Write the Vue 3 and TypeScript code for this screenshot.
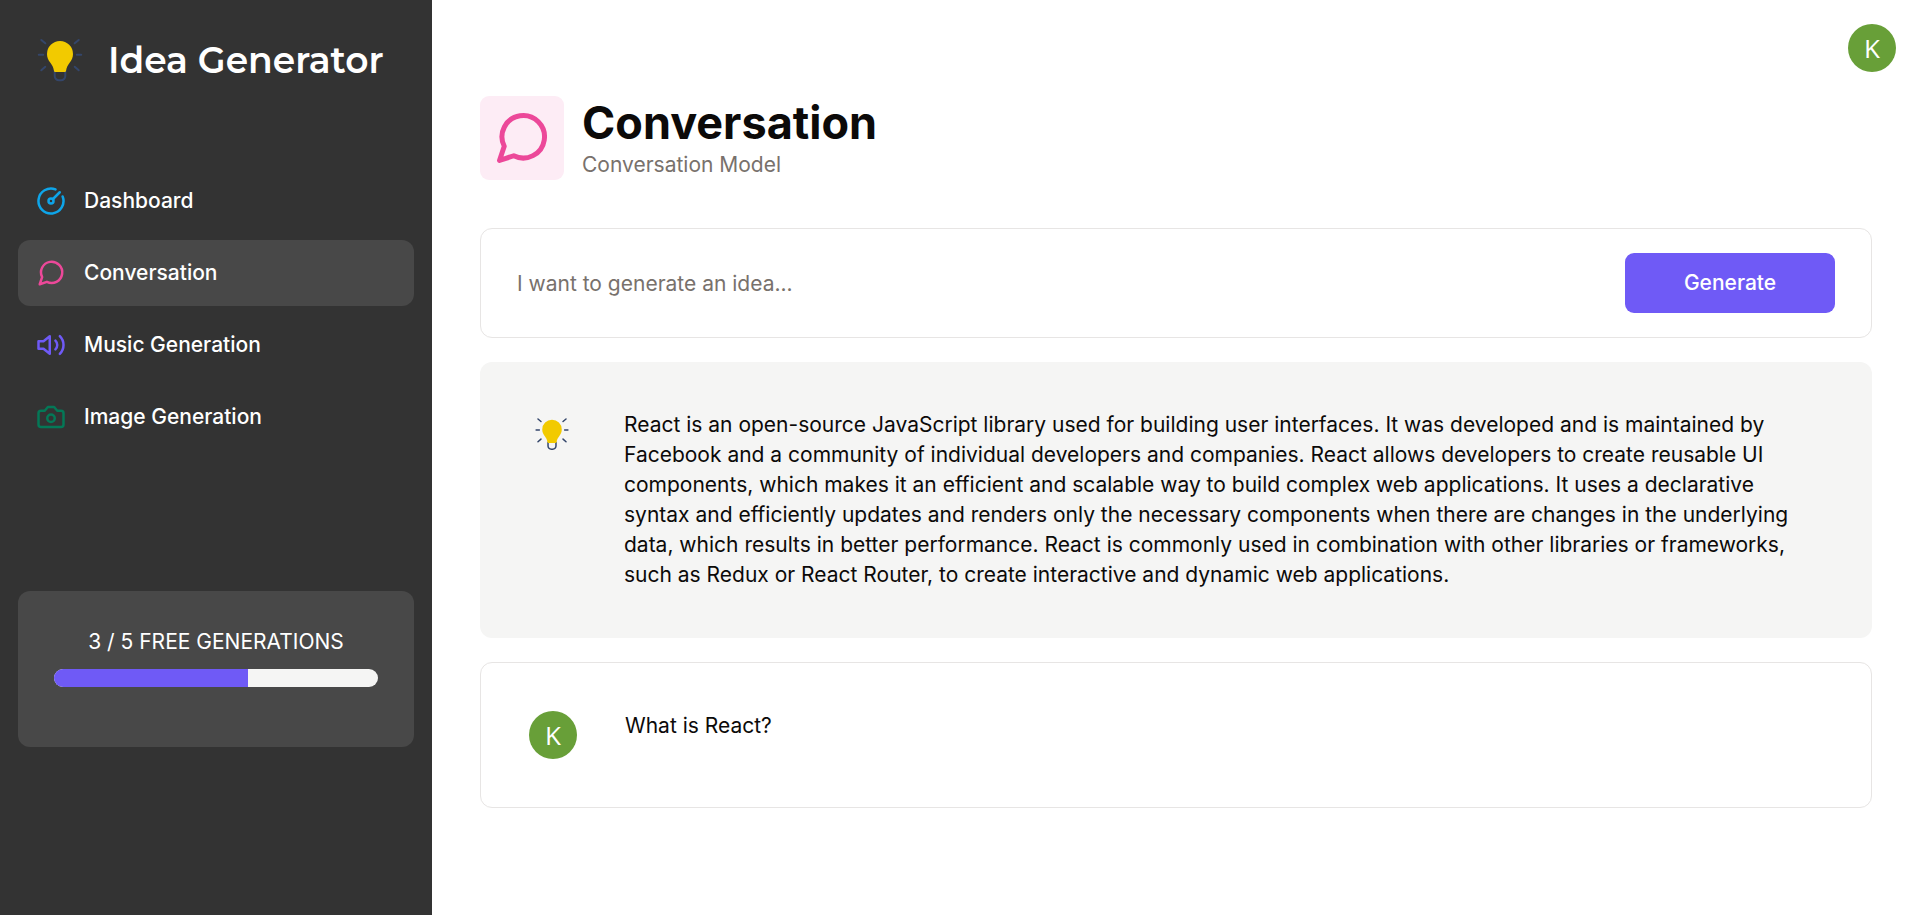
<script setup lang="ts">
import { computed, ref } from 'vue'

interface Shape {
  tag: 'path' | 'circle' | 'polygon'
  attrs: Record<string, string | number>
}

interface NavItem {
  label: string
  tone: string
  active?: boolean
  shapes: Shape[]
}

interface Message {
  id: number
  role: 'assistant' | 'user'
  content: string
}

const bubble: Shape = { tag: 'path', attrs: { d: 'm3 21 1.9-5.7a8.5 8.5 0 1 1 3.8 3.8z' } }

const navItems: NavItem[] = [
  {
    label: 'Dashboard',
    tone: 'sky',
    shapes: [
      { tag: 'path', attrs: { d: 'M15.6 2.7a10 10 0 1 0 5.7 5.7' } },
      { tag: 'circle', attrs: { cx: 12, cy: 12, r: 2 } },
      { tag: 'path', attrs: { d: 'M13.4 10.6 19 5' } },
    ],
  },
  { label: 'Conversation', tone: 'pink', active: true, shapes: [bubble] },
  {
    label: 'Music Generation',
    tone: 'violet',
    shapes: [
      { tag: 'polygon', attrs: { points: '11 5 6 9 2 9 2 15 6 15 11 19 11 5' } },
      { tag: 'path', attrs: { d: 'M15.54 8.46a5 5 0 0 1 0 7.07' } },
      { tag: 'path', attrs: { d: 'M19.07 4.93a10 10 0 0 1 0 14.14' } },
    ],
  },
  {
    label: 'Image Generation',
    tone: 'emerald',
    shapes: [
      {
        tag: 'path',
        attrs: {
          d: 'M14.5 4h-5L7 7H4a2 2 0 0 0-2 2v9a2 2 0 0 0 2 2h16a2 2 0 0 0 2-2V9a2 2 0 0 0-2-2h-3l-2.5-3z',
        },
      },
      { tag: 'circle', attrs: { cx: 12, cy: 13, r: 3 } },
    ],
  },
]

const used = ref(3)
const limit = 5
const progress = computed(() => (used.value / limit) * 100)

const prompt = ref('')

const messages: Message[] = [
  {
    id: 2,
    role: 'assistant',
    content:
      'React is an open-source JavaScript library used for building user interfaces. It was developed and is maintained by Facebook and a community of individual developers and companies. React allows developers to create reusable UI components, which makes it an efficient and scalable way to build complex web applications. It uses a declarative syntax and efficiently updates and renders only the necessary components when there are changes in the underlying data, which results in better performance. React is commonly used in combination with other libraries or frameworks, such as Redux or React Router, to create interactive and dynamic web applications.',
  },
  { id: 1, role: 'user', content: 'What is React?' },
]
</script>

<template>
  <div class="layout">
    <svg class="sprite" aria-hidden="true">
      <symbol id="bulb" viewBox="0 0 48 48">
        <g fill="none" stroke="#34466b" stroke-width="2" stroke-linecap="round">
          <path d="M5.3 4 9.3 7.3M42.7 4 38.7 7.3M2.8 18.8h4.4M40.8 18.8h4.4M5.3 34.3 9.3 30.8M42.7 34.3 38.7 30.8" />
          <path d="M18.7 35v5a4.300 4.300 0 0 0 4.300 4.300h2a4.300 4.300 0 0 0 4.300-4.300v-5" />
        </g>
        <path
          fill="#f2ca00"
          d="M24 5a13 13 0 0 0-13 13c0 3.6 1.4 6.2 3.2 8.6 2 2.7 3.2 4.7 3.7 7.9.2 1 .7 1.5 1.7 1.5h8.8c1 0 1.5-.5 1.7-1.5.5-3.2 1.7-5.2 3.7-7.9C35.6 24.2 37 21.6 37 18A13 13 0 0 0 24 5Z"
        />
      </symbol>
    </svg>

    <aside class="sidebar">
      <a class="brand" href="#">
        <svg class="brand-logo" aria-hidden="true"><use href="#bulb" /></svg>
        <h1>Idea Generator</h1>
      </a>

      <nav class="nav">
        <a
          v-for="item in navItems"
          :key="item.label"
          href="#"
          class="nav-link"
          :class="{ active: item.active }"
        >
          <svg class="icon nav-icon" :class="item.tone" viewBox="0 0 24 24" aria-hidden="true">
            <component :is="shape.tag" v-for="(shape, i) in item.shapes" :key="i" v-bind="shape.attrs" />
          </svg>
          {{ item.label }}
        </a>
      </nav>

      <section class="counter">
        <p>{{ used }} / {{ limit }} FREE GENERATIONS</p>
        <div class="track" role="progressbar" :aria-valuenow="used" aria-valuemin="0" :aria-valuemax="limit">
          <div class="fill" :style="{ width: progress + '%' }"></div>
        </div>
      </section>
    </aside>

    <main class="main">
      <header class="topbar">
        <button type="button" class="avatar" aria-label="Account">K</button>
      </header>

      <div class="content">
        <div class="heading">
          <div class="heading-badge">
            <svg class="icon heading-icon pink" viewBox="0 0 24 24" aria-hidden="true">
              <path :d="String(bubble.attrs.d)" />
            </svg>
          </div>
          <div>
            <h2>Conversation</h2>
            <p class="subtitle">Conversation Model</p>
          </div>
        </div>

        <form class="prompt" @submit.prevent>
          <input v-model="prompt" type="text" aria-label="Prompt" placeholder="I want to generate an idea..." />
          <button type="submit">Generate</button>
        </form>

        <article v-for="message in messages" :key="message.id" class="message" :class="message.role">
          <span v-if="message.role === 'user'" class="avatar">K</span>
          <span v-else class="bot">
            <svg class="bot-logo" aria-hidden="true"><use href="#bulb" /></svg>
          </span>
          <p>{{ message.content }}</p>
        </article>
      </div>
    </main>
  </div>
</template>

<style>
body {
  margin: 0;
  background: #fff;
}
</style>

<style scoped>
.layout {
  display: flex;
  min-height: 100vh;
  font-family: Inter, 'Liberation Sans', sans-serif;
  font-size: 21px;
  line-height: 30px;
  color: #0c0a09;
}

.layout *,
.layout {
  box-sizing: border-box;
}

h1,
h2,
p {
  margin: 0;
}

a {
  color: inherit;
  text-decoration: none;
}

button,
input {
  font: inherit;
  border: 0;
  padding: 0;
}

.sprite {
  position: absolute;
  width: 0;
  height: 0;
}

.icon {
  flex: none;
  fill: none;
  stroke: currentColor;
  stroke-width: 2;
  stroke-linecap: round;
  stroke-linejoin: round;
}

.sky {
  color: #0ea5e9;
}

.pink {
  color: #ec4899;
}

.violet {
  color: #6f5af6;
}

.emerald {
  color: #047857;
}

.sidebar {
  flex: 0 0 432px;
  padding: 36px 18px 24px;
  background: #333;
  color: #fff;
}

.brand {
  display: flex;
  align-items: center;
  gap: 24px;
  padding-left: 18px;
  margin-bottom: 84px;
}

.brand-logo {
  flex: none;
  width: 48px;
  height: 48px;
}

h1 {
  font-family: Montserrat, Inter, sans-serif;
  font-size: 36px;
  line-height: 48px;
  font-weight: 600;
  white-space: nowrap;
}

.nav {
  display: flex;
  flex-direction: column;
  gap: 6px;
}

.nav-link {
  display: flex;
  align-items: center;
  gap: 18px;
  padding: 18px;
  border-radius: 12px;
  font-weight: 500;
}

.nav-link.active,
.counter {
  background: #484848;
}

.nav-icon {
  width: 30px;
  height: 30px;
}

.counter {
  margin-top: 141px;
  padding: 36px 36px 60px;
  border-radius: 12px;
  text-align: center;
}

.track {
  height: 18px;
  margin-top: 12px;
  border-radius: 9px;
  background: #f5f5f4;
  overflow: hidden;
}

.fill {
  height: 100%;
  background: #6f5af6;
}

.main {
  flex: 1;
  min-width: 0;
}

.topbar {
  display: flex;
  justify-content: flex-end;
  padding: 24px 24px 0;
}

.avatar {
  flex: none;
  width: 48px;
  height: 48px;
  border-radius: 50%;
  background: #689f38;
  color: #fff;
  font-family: 'Open Sans', sans-serif;
  font-size: 26px;
  font-weight: 400;
  line-height: 48px;
  text-align: center;
}

.content {
  display: flex;
  flex-direction: column;
  gap: 24px;
  padding: 24px 48px 48px;
}

.heading {
  display: flex;
  align-items: center;
  gap: 18px;
  margin-bottom: 24px;
}

.heading-badge {
  display: flex;
  padding: 12px;
  border-radius: 9px;
  background: #fdecf5;
}

.heading-icon {
  width: 60px;
  height: 60px;
}

h2 {
  font-size: 45px;
  line-height: 54px;
  font-weight: 700;
}

.subtitle {
  color: #78716c;
}

.prompt {
  display: flex;
  align-items: center;
  gap: 12px;
  padding: 24px 36px;
  border: 1px solid #e7e5e4;
  border-radius: 12px;
}

.prompt input {
  flex: 1;
  min-width: 0;
  height: 60px;
  background: transparent;
  color: inherit;
  outline: none;
}

.prompt input::placeholder {
  color: #78716c;
  opacity: 1;
}

.prompt button {
  width: 210px;
  height: 60px;
  border-radius: 9px;
  background: #6f5af6;
  color: #fff;
  font-weight: 500;
}

.message {
  display: flex;
  align-items: flex-start;
  gap: 48px;
  padding: 48px;
  border-radius: 12px;
}

.message.user {
  border: 1px solid #e7e5e4;
}

.message.assistant {
  background: #f5f5f4;
}

.bot {
  display: flex;
  flex: none;
  padding: 6px;
}

.bot-logo {
  width: 36px;
  height: 36px;
}
</style>
